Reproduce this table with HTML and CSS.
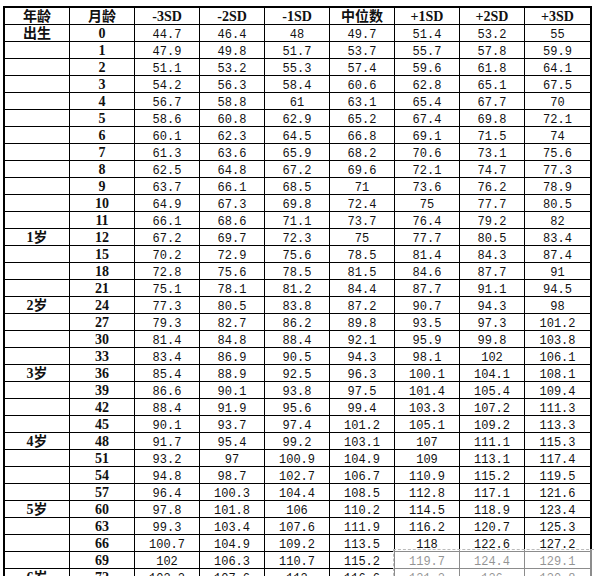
FILE: index.html
```html
<!DOCTYPE html>
<html lang="zh-CN">
<head>
<meta charset="utf-8">
<title>身高标准</title>
<link rel="stylesheet" href="styles.css">
</head>
<body>
<div class="page">
<table class="grid">
<colgroup><col><col><col><col><col><col><col><col><col></colgroup>
<thead>
<tr class="head"><th>年龄</th><th>月龄</th><th>-3SD</th><th>-2SD</th><th>-1SD</th><th>中位数</th><th>+1SD</th><th>+2SD</th><th>+3SD</th></tr>
</thead>
<tbody>
<tr><td class="age">出生</td><td class="mo">0</td><td>44.7</td><td>46.4</td><td>48</td><td>49.7</td><td>51.4</td><td>53.2</td><td>55</td></tr>
<tr><td class="age"></td><td class="mo">1</td><td>47.9</td><td>49.8</td><td>51.7</td><td>53.7</td><td>55.7</td><td>57.8</td><td>59.9</td></tr>
<tr><td class="age"></td><td class="mo">2</td><td>51.1</td><td>53.2</td><td>55.3</td><td>57.4</td><td>59.6</td><td>61.8</td><td>64.1</td></tr>
<tr><td class="age"></td><td class="mo">3</td><td>54.2</td><td>56.3</td><td>58.4</td><td>60.6</td><td>62.8</td><td>65.1</td><td>67.5</td></tr>
<tr><td class="age"></td><td class="mo">4</td><td>56.7</td><td>58.8</td><td>61</td><td>63.1</td><td>65.4</td><td>67.7</td><td>70</td></tr>
<tr><td class="age"></td><td class="mo">5</td><td>58.6</td><td>60.8</td><td>62.9</td><td>65.2</td><td>67.4</td><td>69.8</td><td>72.1</td></tr>
<tr><td class="age"></td><td class="mo">6</td><td>60.1</td><td>62.3</td><td>64.5</td><td>66.8</td><td>69.1</td><td>71.5</td><td>74</td></tr>
<tr><td class="age"></td><td class="mo">7</td><td>61.3</td><td>63.6</td><td>65.9</td><td>68.2</td><td>70.6</td><td>73.1</td><td>75.6</td></tr>
<tr><td class="age"></td><td class="mo">8</td><td>62.5</td><td>64.8</td><td>67.2</td><td>69.6</td><td>72.1</td><td>74.7</td><td>77.3</td></tr>
<tr><td class="age"></td><td class="mo">9</td><td>63.7</td><td>66.1</td><td>68.5</td><td>71</td><td>73.6</td><td>76.2</td><td>78.9</td></tr>
<tr><td class="age"></td><td class="mo">10</td><td>64.9</td><td>67.3</td><td>69.8</td><td>72.4</td><td>75</td><td>77.7</td><td>80.5</td></tr>
<tr><td class="age"></td><td class="mo">11</td><td>66.1</td><td>68.6</td><td>71.1</td><td>73.7</td><td>76.4</td><td>79.2</td><td>82</td></tr>
<tr><td class="age">1岁</td><td class="mo">12</td><td>67.2</td><td>69.7</td><td>72.3</td><td>75</td><td>77.7</td><td>80.5</td><td>83.4</td></tr>
<tr><td class="age"></td><td class="mo">15</td><td>70.2</td><td>72.9</td><td>75.6</td><td>78.5</td><td>81.4</td><td>84.3</td><td>87.4</td></tr>
<tr><td class="age"></td><td class="mo">18</td><td>72.8</td><td>75.6</td><td>78.5</td><td>81.5</td><td>84.6</td><td>87.7</td><td>91</td></tr>
<tr><td class="age"></td><td class="mo">21</td><td>75.1</td><td>78.1</td><td>81.2</td><td>84.4</td><td>87.7</td><td>91.1</td><td>94.5</td></tr>
<tr><td class="age">2岁</td><td class="mo">24</td><td>77.3</td><td>80.5</td><td>83.8</td><td>87.2</td><td>90.7</td><td>94.3</td><td>98</td></tr>
<tr><td class="age"></td><td class="mo">27</td><td>79.3</td><td>82.7</td><td>86.2</td><td>89.8</td><td>93.5</td><td>97.3</td><td>101.2</td></tr>
<tr><td class="age"></td><td class="mo">30</td><td>81.4</td><td>84.8</td><td>88.4</td><td>92.1</td><td>95.9</td><td>99.8</td><td>103.8</td></tr>
<tr><td class="age"></td><td class="mo">33</td><td>83.4</td><td>86.9</td><td>90.5</td><td>94.3</td><td>98.1</td><td>102</td><td>106.1</td></tr>
<tr><td class="age">3岁</td><td class="mo">36</td><td>85.4</td><td>88.9</td><td>92.5</td><td>96.3</td><td>100.1</td><td>104.1</td><td>108.1</td></tr>
<tr><td class="age"></td><td class="mo">39</td><td>86.6</td><td>90.1</td><td>93.8</td><td>97.5</td><td>101.4</td><td>105.4</td><td>109.4</td></tr>
<tr><td class="age"></td><td class="mo">42</td><td>88.4</td><td>91.9</td><td>95.6</td><td>99.4</td><td>103.3</td><td>107.2</td><td>111.3</td></tr>
<tr><td class="age"></td><td class="mo">45</td><td>90.1</td><td>93.7</td><td>97.4</td><td>101.2</td><td>105.1</td><td>109.2</td><td>113.3</td></tr>
<tr><td class="age">4岁</td><td class="mo">48</td><td>91.7</td><td>95.4</td><td>99.2</td><td>103.1</td><td>107</td><td>111.1</td><td>115.3</td></tr>
<tr><td class="age"></td><td class="mo">51</td><td>93.2</td><td>97</td><td>100.9</td><td>104.9</td><td>109</td><td>113.1</td><td>117.4</td></tr>
<tr><td class="age"></td><td class="mo">54</td><td>94.8</td><td>98.7</td><td>102.7</td><td>106.7</td><td>110.9</td><td>115.2</td><td>119.5</td></tr>
<tr><td class="age"></td><td class="mo">57</td><td>96.4</td><td>100.3</td><td>104.4</td><td>108.5</td><td>112.8</td><td>117.1</td><td>121.6</td></tr>
<tr><td class="age">5岁</td><td class="mo">60</td><td>97.8</td><td>101.8</td><td>106</td><td>110.2</td><td>114.5</td><td>118.9</td><td>123.4</td></tr>
<tr><td class="age"></td><td class="mo">63</td><td>99.3</td><td>103.4</td><td>107.6</td><td>111.9</td><td>116.2</td><td>120.7</td><td>125.3</td></tr>
<tr><td class="age"></td><td class="mo">66</td><td>100.7</td><td>104.9</td><td>109.2</td><td>113.5</td><td>118</td><td>122.6</td><td>127.2</td></tr>
<tr><td class="age"></td><td class="mo">69</td><td>102</td><td>106.3</td><td>110.7</td><td>115.2</td><td>119.7</td><td>124.4</td><td>129.1</td></tr>
<tr><td class="age">6岁</td><td class="mo">72</td><td>103.2</td><td>107.6</td><td>112</td><td>116.6</td><td>121.2</td><td>126</td><td>130.8</td></tr>
</tbody>
</table>
<div class="mark"></div>
</div>
</body>
</html>
```
FILE: styles.css
```css
html, body {
  margin: 0;
  padding: 0;
  background: #fff;
}
body {
  width: 596px;
  height: 576px;
  overflow: hidden;
}
.page {
  position: relative;
  padding: 6px 0 0 3px;
}
.grid {
  border-collapse: separate;
  border-spacing: 0;
  table-layout: fixed;
  width: 588px;
  border: 2px solid #000;
  color: #111;
}
.grid col {
  width: 65px;
}
.grid th,
.grid td {
  box-sizing: border-box;
  height: 17px;
  padding: 0;
  border-right: 1px solid #000;
  border-bottom: 1px solid #000;
  text-align: center;
  vertical-align: bottom;
  white-space: nowrap;
  overflow: hidden;
  font-family: "Liberation Mono", "DejaVu Sans Mono", monospace;
  font-size: 12px;
  line-height: 11px;
  font-weight: normal;
}
.grid th:last-child,
.grid td:last-child {
  border-right: none;
}
.grid th,
.grid td.age,
.grid td.mo {
  font-family: "Liberation Serif", "Noto Sans CJK SC", serif;
  font-size: 14px;
  line-height: 14px;
  font-weight: bold;
}
.mark {
  position: absolute;
  left: 393px;
  top: 549px;
  width: 200px;
  height: 40px;
  background: rgba(255, 255, 255, 0.55);
  border-top: 1px dashed #bbb;
  border-left: 1px dashed #bbb;
}
```
